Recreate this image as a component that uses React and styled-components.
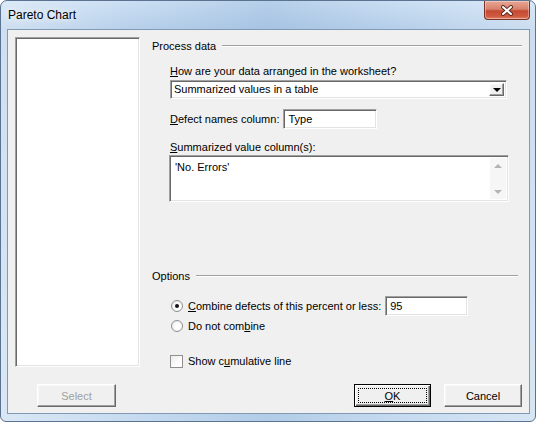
import React from 'react';
import styled, { createGlobalStyle, css } from 'styled-components';

const GlobalStyle = createGlobalStyle`
  html, body {
    margin: 0;
    padding: 0;
    width: 536px;
    height: 422px;
    overflow: hidden;
    background: #ffffff;
  }
  body {
    font-family: "Liberation Sans", Arial, sans-serif;
    font-size: 11px;
    color: #000;
  }
  * { box-sizing: border-box; }
`;

const sunken = css`
  border: 1px solid;
  border-color: #a0a0a0 #ffffff #ffffff #a0a0a0;
  box-shadow: inset 1px 1px #696969, inset -1px -1px #e3e3e3;
  background: #ffffff;
`;

const raised = css`
  border: 1px solid;
  border-color: #ffffff #696969 #696969 #ffffff;
  box-shadow: inset -1px -1px #a0a0a0, inset 1px 1px #f8f8f8;
  background: #f0f0f0;
`;

const Window = styled.div`
  width: 536px;
  height: 422px;
  display: flex;
  flex-direction: column;
  border: 1px solid #5b7390;
  border-radius: 7px 7px 6px 6px;
  overflow: hidden;
  background:
    linear-gradient(90deg, rgba(255,255,255,0.35) 0%, rgba(255,255,255,0) 25%, rgba(120,160,205,0.25) 50%, rgba(255,255,255,0) 75%, rgba(255,255,255,0.3) 100%),
    linear-gradient(180deg, #cbdff3 0%, #b6cfea 28px, #bfd6ee 60%, #c6dbf0 100%);
`;

const TitleBar = styled.div`
  height: 28px;
  display: flex;
  justify-content: space-between;
  align-items: flex-start;
  padding-left: 7px;
`;

const Title = styled.div`
  font-family: "Liberation Sans", Arial, sans-serif;
  font-size: 12px;
  line-height: 28px;
  color: #000;
  text-shadow: 0 0 6px rgba(255,255,255,0.95), 0 0 10px rgba(255,255,255,0.8);
`;

const CloseButton = styled.div`
  width: 46px;
  height: 19px;
  margin-right: 5px;
  border: 1px solid #7a3428;
  border-top: none;
  border-radius: 0 0 4px 4px;
  background: linear-gradient(180deg, #e8a795 0%, #d8826d 45%, #c44a32 55%, #cf5a3f 85%, #e0866c 100%);
  box-shadow: inset 0 0 0 1px rgba(255,255,255,0.35);
  display: flex;
  align-items: center;
  justify-content: center;
`;

const Client = styled.div`
  flex: 1;
  margin: 0 5px 7px 6px;
  border: 1px solid #8299b4;
  background: #f0f0f0;
  padding: 7px 7px 6px 7px;
  display: flex;
  flex-direction: column;
`;

const Main = styled.div`
  display: flex;
  align-items: flex-start;
`;

const ListBox = styled.div`
  ${sunken};
  width: 125px;
  height: 330px;
  flex-shrink: 0;
`;

const Form = styled.div`
  flex: 1;
  margin-left: 12px;
  display: flex;
  flex-direction: column;
`;

const GroupHeader = styled.div`
  height: 18px;
  display: flex;
  align-items: center;
  margin-top: ${(p) => p.$top || 0}px;
  margin-right: ${(p) => p.$inset || 0}px;

  span { white-space: nowrap; padding-right: 6px; }
  &::after {
    content: '';
    flex: 1;
    height: 0;
    border-top: 1px solid #a0a0a0;
    border-bottom: 1px solid #ffffff;
  }
`;

const Indent = styled.div`
  padding-left: 18px;
  display: flex;
  flex-direction: column;
`;

const Label = styled.div`
  line-height: 14px;
  margin-top: ${(p) => p.$top || 0}px;
  white-space: nowrap;
  u { text-decoration: underline; }
`;

const Select = styled.div`
  ${sunken};
  width: 337px;
  height: 19px;
  margin-top: 2px;
  display: flex;
  align-items: stretch;
`;

const SelectValue = styled.div`
  flex: 1;
  padding-left: 3px;
  line-height: 17px;
`;

const ArrowButton = styled.div`
  ${raised};
  width: 15px;
  margin: 2px 2px 2px 0;
  display: flex;
  align-items: center;
  justify-content: center;

  &::before {
    content: '';
    border-left: 4px solid transparent;
    border-right: 4px solid transparent;
    border-top: 4px solid #000;
  }
`;

const FieldRow = styled.div`
  display: flex;
  align-items: center;
  height: ${(p) => p.$height || 20}px;
  margin-top: ${(p) => p.$top || 0}px;
`;

const TextBox = styled.div`
  ${sunken};
  width: ${(p) => p.$width}px;
  height: 20px;
  margin-left: ${(p) => p.$gap || 0}px;
  padding-left: 4px;
  line-height: 18px;
`;

const TextArea = styled.div`
  ${sunken};
  width: 340px;
  height: 47px;
  margin-left: -1px;
  margin-top: 1px;
  display: flex;
  padding: 2px;
`;

const AreaText = styled.div`
  flex: 1;
  padding: 2px 0 0 3px;
  line-height: 14px;
`;

const ScrollTrack = styled.div`
  width: 16px;
  background: #f6f6f6;
  display: flex;
  flex-direction: column;
  justify-content: space-between;
  align-items: center;
  padding: 6px 0 5px;
`;

const ScrollArrow = styled.div`
  width: 0;
  height: 0;
  border-left: 4px solid transparent;
  border-right: 4px solid transparent;
  ${(p) => (p.$down
    ? css`border-top: 4px solid #b4b4b4;`
    : css`border-bottom: 4px solid #b4b4b4;`)}
`;

const Radio = styled.span`
  width: 12px;
  height: 12px;
  border-radius: 50%;
  border: 1px solid #8f8f8f;
  background: radial-gradient(circle at 60% 60%, #ffffff 30%, #e2e2e2 100%);
  margin: 0 5px 0 1px;
  display: inline-flex;
  align-items: center;
  justify-content: center;
  flex-shrink: 0;

  &::after {
    content: '';
    width: 4px;
    height: 4px;
    border-radius: 50%;
    background: ${(p) => (p.$checked ? '#111' : 'transparent')};
  }
`;

const Checkbox = styled.span`
  width: 13px;
  height: 13px;
  border: 1px solid #8f8f8f;
  background: linear-gradient(135deg, #ececec 0%, #ffffff 70%);
  margin-right: 5px;
  flex-shrink: 0;
`;

const Footer = styled.div`
  margin-top: auto;
  display: flex;
  align-items: center;
  padding-left: 22px;
`;

const Button = styled.div`
  ${raised};
  position: relative;
  width: ${(p) => p.$width}px;
  height: 23px;
  margin-left: ${(p) => p.$gap || 0}px;
  display: flex;
  align-items: center;
  justify-content: center;
  color: ${(p) => (p.$disabled ? '#a0a0a0' : '#000')};

  ${(p) => p.$default && css`
    border-color: #000;
    box-shadow: inset 1px 1px #ffffff, inset -1px -1px #696969, inset -2px -2px #a0a0a0;
    &::after {
      content: '';
      position: absolute;
      inset: 3px;
      border: 1px dotted #000;
    }
  `}
`;

const Spacer = styled.div`
  flex: 1;
`;

const CloseIcon = () => (
  <svg width="14" height="11" viewBox="0 0 14 11">
    <path d="M3 2 L11 9 M11 2 L3 9" stroke="#5a2a22" strokeWidth="4" strokeLinecap="round" />
    <path d="M3 2 L11 9 M11 2 L3 9" stroke="#ffffff" strokeWidth="2" strokeLinecap="round" />
  </svg>
);

export default function App() {
  return (
    <>
      <GlobalStyle />
      <Window>
        <TitleBar>
          <Title>Pareto Chart</Title>
          <CloseButton>
            <CloseIcon />
          </CloseButton>
        </TitleBar>
        <Client>
          <Main>
            <ListBox />
            <Form>
              <GroupHeader>
                <span>Process data</span>
              </GroupHeader>
              <Indent>
                <Label $top={9}><u>H</u>ow are your data arranged in the worksheet?</Label>
                <Select>
                  <SelectValue>Summarized values in a table</SelectValue>
                  <ArrowButton />
                </Select>
                <FieldRow $top={10}>
                  <Label><u>D</u>efect names column:</Label>
                  <TextBox $width={94} $gap={4}>Type</TextBox>
                </FieldRow>
                <Label $top={11}><u>S</u>ummarized value column(s):</Label>
                <TextArea>
                  <AreaText>'No. Errors'</AreaText>
                  <ScrollTrack>
                    <ScrollArrow />
                    <ScrollArrow $down />
                  </ScrollTrack>
                </TextArea>
              </Indent>

              <GroupHeader $top={65} $inset={4}>
                <span>Options</span>
              </GroupHeader>
              <Indent>
                <FieldRow $top={11}>
                  <Radio $checked />
                  <Label><u>C</u>ombine defects of this percent or less:</Label>
                  <TextBox $width={83} $gap={4}>95</TextBox>
                </FieldRow>
                <FieldRow $top={2} $height={16}>
                  <Radio />
                  <Label>Do not com<u>b</u>ine</Label>
                </FieldRow>
                <FieldRow $top={19} $height={16}>
                  <Checkbox />
                  <Label>Show c<u>u</u>mulative line</Label>
                </FieldRow>
              </Indent>
            </Form>
          </Main>
          <Footer>
            <Button $width={79} $disabled>Select</Button>
            <Spacer />
            <Button $width={77} $default><u>O</u>K</Button>
            <Button $width={78} $gap={13}>Cancel</Button>
          </Footer>
        </Client>
      </Window>
    </>
  );
}
